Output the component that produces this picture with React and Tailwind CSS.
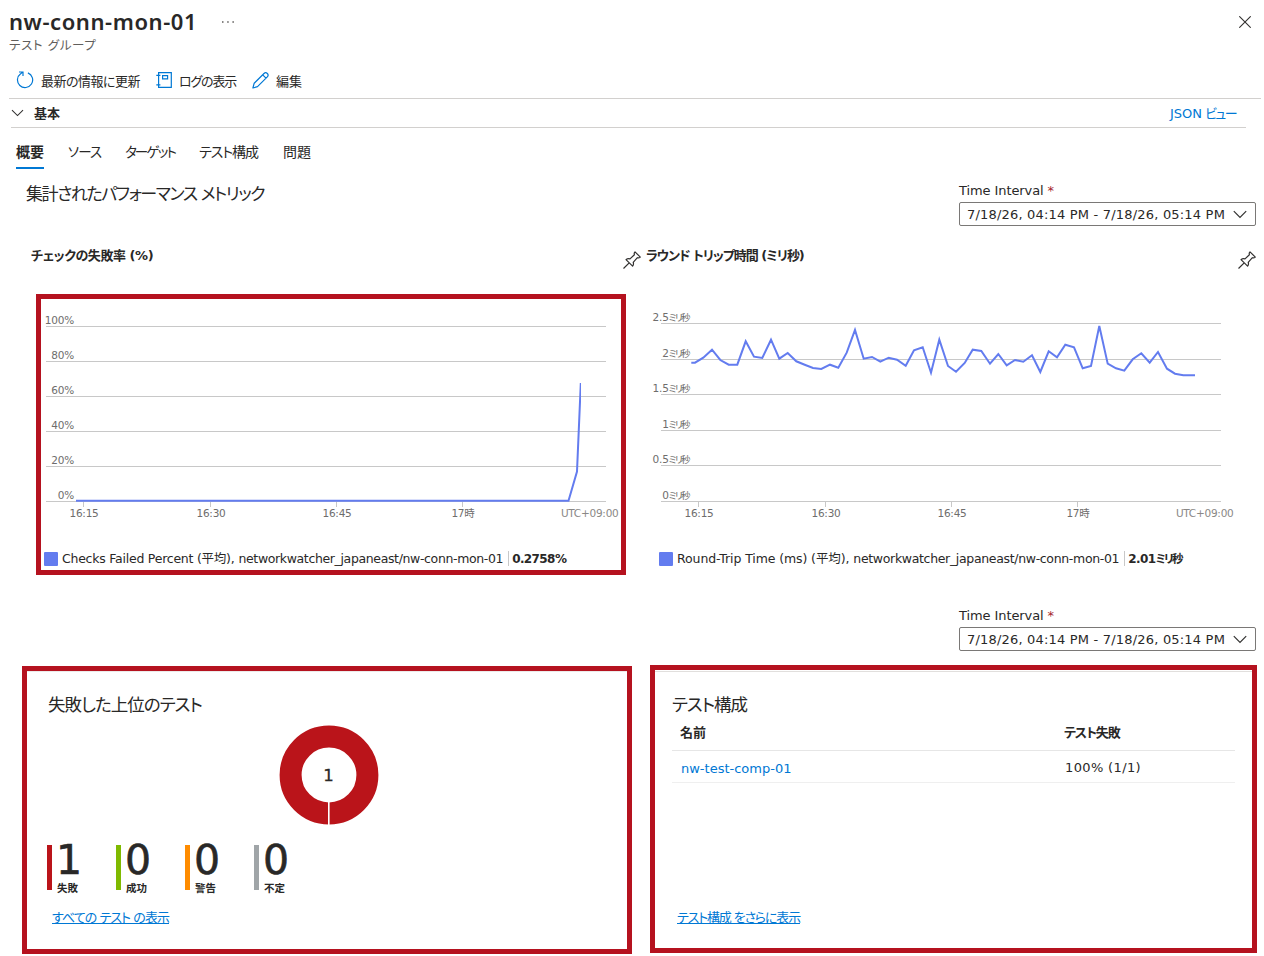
import React from "react";

const PinIcon = () => (
  <svg width="18" height="18" viewBox="0 0 18 18" fill="none" stroke="#323130" strokeWidth="1.2" strokeLinejoin="round" className="shrink-0">
    <path d="M0.5 17.5 6.2 11.8M3 8.6 9.6 15.1C10.6 13.9 10.7 12.6 10.2 11.3L14.4 6.7C15.4 7 16.4 6.8 17.3 6.1L12 0.8C11.2 1.6 11 2.6 11.4 3.7L7 7.9C5.6 7.4 4.2 7.6 3 8.6Z" />
  </svg>
);

const RefreshIcon = () => (
  <svg width="18" height="18" viewBox="0 0 18 18" fill="none" stroke="#0078d4" strokeWidth="1.2">
    <path d="M11.9 1.9A7.6 7.6 0 1 1 4.6 2.8L6.8 1.1M3 1H7V5" />
  </svg>
);

const LogIcon = () => (
  <svg width="16" height="16" viewBox="0 0 16 16" fill="none" stroke="#0078d4" strokeWidth="1.2">
    <path d="M2.6 0.6H15.3V15.3H2.6ZM0.3 3.4H4.4M0.3 12.8H4.4M6.6 3.6H11.6V6.8H6.6Z" />
  </svg>
);

const PencilIcon = () => (
  <svg width="17" height="17" viewBox="0 0 17 17" fill="none" stroke="#0078d4" strokeWidth="1.2" strokeLinejoin="round">
    <path d="M0.9 16 2.2 11.2 12 1.5A2.1 2.1 0 0 1 15.3 4.8L5.5 14.6ZM10.7 2.8 14 6.1" />
  </svg>
);

const Chevron = ({ className }) => (
  <svg width="14" height="9" viewBox="0 0 14 9" fill="none" stroke="#323130" strokeWidth="1.2" className={className}>
    <path d="M0.8 1.2 7 7.4 13.2 1.2" />
  </svg>
);

function TimeInterval() {
  return (
    <div className="flex w-[297px] flex-col gap-1">
      <div className="h-4 text-[13px] leading-[18px] tracking-[-0.09px]">
        Time Interval <span className="text-[#a4262c]">*</span>
      </div>
      <div className="flex h-6 items-center justify-between rounded-[2px] border border-[#7a7876] pl-[7px] pr-2">
        <span className="whitespace-nowrap pt-[2px] text-[13px] leading-4 tracking-[0.19px]">7/18/26, 04:14 PM - 7/18/26, 05:14 PM</span>
        <Chevron />
      </div>
    </div>
  );
}

const failRate = {
  title: "チェックの失敗率 (%)",
  titleClass: "tracking-[-0.45px]",
  highlighted: true,
  unit: "%",
  unitClass: "tracking-[-0.26px]",
  grid: [27, 62, 97, 132, 167, 202],
  labels: ["100", "80", "60", "40", "20", "0"],
  line: "35,201.7 527.5,201.7 536,172.5 539.8,84",
  series: ["Checks Failed Percent (平均),", "networkwatcher_japaneast/nw-conn-mon-01"],
  seriesClass: ["tracking-[-0.24px]", "tracking-[-0.36px]"],
  value: "0.2758",
  valueUnitClass: "tracking-[-0.6px]",
};

const roundTrip = {
  title: "ラウンド トリップ時間 (ミリ秒)",
  titleClass: "tracking-[-1.03px]",
  highlighted: false,
  unit: "ミリ秒",
  unitClass: "text-[9.5px] tracking-[-1.6px]",
  grid: [24, 60, 95, 131, 166, 202],
  labels: ["2.5", "2", "1.5", "1", "0.5", "0"],
  line: "35.3,63.7 39,63.7 47.3,58.7 56,50.7 64.3,61 72.7,65.7 81.3,65.7 89.7,42.3 98,57.7 106.3,59 115,40.7 123.3,59.7 131.7,54 140.3,62.3 148.7,65.7 157,69 165.3,70 174,65.7 182.3,68.7 190.7,53.7 199,31 207.7,59.7 216,58 224.3,62.7 232.7,58.7 241,60.7 249.7,66.7 258,51.3 266.7,48.3 275,73.7 283.3,40.7 292,67 300,72.7 308.7,64 316.7,50.7 325.3,52 334,64.7 342.3,55 350.7,66.3 359,61 367.3,62.7 376,56.3 384.3,73 392.7,52.3 401,58.3 409.3,45.7 418,48.3 426.7,69.3 435,67 443.3,27 451.7,64.7 460,69.3 468.3,71.7 476.7,60.3 485.3,54.3 493.7,63.7 502,53 511,69.7 519,74.7 527.3,76.3 539,76.3",
  series: ["Round-Trip Time (ms) (平均),", "networkwatcher_japaneast/nw-conn-mon-01"],
  seriesClass: ["tracking-[-0.1px]", "tracking-[-0.33px]"],
  value: "2.01",
  valueUnitClass: "text-[11.5px] tracking-[-1.8px]",
};

const timeTicks = [
  [42.5, "16:15"],
  [169.5, "16:30"],
  [295.5, "16:45"],
  [421.5, "17時"],
];

function Chart({ c }) {
  return (
    <section className="w-[615px]">
      <header className="flex h-[30px] items-center justify-between pl-[5px]">
        <h2 className={"whitespace-nowrap pt-px text-[13px] font-bold leading-5 " + c.titleClass}>{c.title}</h2>
        <div className="pt-[10px]">
          <PinIcon />
        </div>
      </header>
      <div className={"ml-[10px] mt-6 h-[281px] w-[590px] border-[5px] " + (c.highlighted ? "border-[#b5121f]" : "border-transparent")}>
        <svg width="580" height="248" viewBox="0 0 580 248" className="block overflow-visible text-[10.5px]">
          {c.grid.map((y, i) => (
            <g key={y}>
              <rect x="5" y={y} width="560" height="1" fill="#c8c8c8" />
              <text x="33" y={y - 2} textAnchor="end" fill="#6e6d6c" className="tracking-[-0.2px]">
                {c.labels[i]}
                <tspan className={c.unitClass}>{c.unit}</tspan>
              </text>
            </g>
          ))}
          {timeTicks.map(([x, label]) => (
            <g key={label}>
              <rect x={x - 0.5} y="203" width="1" height="5" fill="#c8c8c8" />
              <text x={x + 0.5} y="218" textAnchor="middle" fill="#6e6d6c" className="tracking-[-0.25px]">{label}</text>
            </g>
          ))}
          <text x="577.5" y="218" textAnchor="end" fill="#8a8886" className="tracking-[-0.25px]">UTC+09:00</text>
          <svg width="540" height="248">
            <polyline points={c.line} fill="none" stroke="#637cef" strokeWidth="2" />
          </svg>
        </svg>
        <div className="flex h-[23px] items-center whitespace-nowrap pl-[3px] text-[12.5px] leading-4">
          <span className="mr-1 size-[14px] shrink-0 rounded-[1px] bg-[#637cef]" />
          <span className={c.seriesClass[0]}>{c.series[0]}</span>
          <span className={"ml-1 " + c.seriesClass[1]}>{c.series[1]}</span>
          <span className="ml-[5px] mr-[3px] h-[15px] w-px shrink-0 bg-[#c8c8c8]" />
          <span className="text-[12px] font-bold tracking-[-0.6px]">
            {c.value}
            <span className={c.valueUnitClass}>{c.unit}</span>
          </span>
        </div>
      </div>
    </section>
  );
}

const stats = [
  ["1", "失敗", "bg-[#ba141a]"],
  ["0", "成功", "bg-[#7fba00]"],
  ["0", "警告", "bg-[#ff8c00]"],
  ["0", "不定", "bg-[#a0a5a8]"],
];

export default function App() {
  return (
    <div className="h-[956px] w-[1264px] overflow-hidden bg-white font-['DejaVu_Sans','Noto_Sans_CJK_JP',sans-serif] text-[#292827] [font-feature-settings:'palt']">
      <header className="flex h-[38px] items-start pl-[9px] pr-[13px] pt-[5px]">
        <h1 className="whitespace-nowrap font-['Noto_Sans',sans-serif] text-[22px] font-semibold leading-8 tracking-[0.58px]">nw-conn-mon-01</h1>
        <svg width="12" height="2" viewBox="0 0 12 2" fill="#605e5c" className="ml-[25px] mt-4">
          <path d="M0 0.3h1.5v1.5h-1.5zM5.2 0.3h1.5v1.5h-1.5zM10.4 0.3h1.5v1.5h-1.5z" />
        </svg>
        <svg width="12" height="12" viewBox="0 0 12 12" stroke="#323130" strokeWidth="1.1" className="ml-auto mt-[11px]">
          <path d="M0.3 0.3 11.7 11.7M11.7 0.3 0.3 11.7" />
        </svg>
      </header>
      <div className="h-[14px] pl-[9px] text-[12.5px] leading-4 tracking-[0.65px] text-[#605e5c]">テスト グループ</div>

      <div className="ml-[9px] mr-[3px] mt-3 flex h-[35px] items-center whitespace-nowrap border-b border-[#d2d0ce] pl-[7px] text-[13px] leading-[22px]">
        <div className="-mt-[2px]"><RefreshIcon /></div>
        <span className="ml-[7px] w-[100px] pt-px tracking-[-0.51px]">最新の情報に更新</span>
        <div className="-mt-[2px] ml-[15px]"><LogIcon /></div>
        <span className="ml-[7px] w-[57px] pt-px tracking-[-1.2px]">ログの表示</span>
        <div className="-mt-[2px] ml-[16px]"><PencilIcon /></div>
        <span className="ml-[7px] pt-px">編集</span>
      </div>

      <div className="ml-[11px] mr-[18px] flex h-[29px] items-center border-b border-[#d2d0ce] pr-[10px] text-[13px] leading-5">
        <Chevron className="h-2 w-[13px]" />
        <span className="ml-[10px] pt-px font-bold">基本</span>
        <a className="ml-auto pt-[2px] text-[#0078d4]">JSON <span className="-ml-[1px] tracking-[-1.6px]">ビュー</span></a>
      </div>

      <nav className="ml-4 mt-2 flex h-[33px] whitespace-nowrap text-[14px] leading-[33px]">
        <span className="mr-6 w-7 border-b-2 border-[#0078d4] font-bold">概要</span>
        <span className="mr-[22px] w-[35px] text-[13.5px] tracking-[-0.9px]">ソース</span>
        <span className="mr-[22px] w-[52px] text-[13.5px] tracking-[-1.85px]">ターゲット</span>
        <span className="mr-6 w-[60px] tracking-[-1.02px]">テスト構成</span>
        <span>問題</span>
      </nav>

      <div className="flex h-[57px] items-start justify-between pl-[26px] pr-2">
        <h2 className="whitespace-nowrap pt-[13px] text-[17px] leading-6 tracking-[-1.43px]">集計されたパフォーマンス メトリック</h2>
        <div className="pt-[13px]"><TimeInterval /></div>
      </div>

      <div className="ml-[26px] mt-[14px] flex">
        <Chart c={failRate} />
        <Chart c={roundTrip} />
      </div>

      <div className="mt-8 flex justify-end pr-2">
        <TimeInterval />
      </div>

      <div className="mt-[14px] flex items-start gap-[18px] pl-[22px]">
        <section className="mt-px h-[288px] w-[610px] border-[5px] border-[#b5121f]">
          <div className="border-t border-[#ecebea] pl-5 pt-5">
            <h2 className="whitespace-nowrap pl-px pt-px text-[17.5px] leading-6 tracking-[-0.95px]">失敗した上位のテスト</h2>
            <svg width="100" height="100" viewBox="0 0 100 100" className="ml-[232px] mt-2 block">
              <circle cx="50" cy="50" r="38.4" fill="none" stroke="#ba141a" strokeWidth="22" />
              <rect x="49" y="77" width="1.6" height="23" fill="#fff" />
              <text x="49.5" y="56" textAnchor="middle" fill="#292827" stroke="#292827" strokeWidth="0.3" className="text-[16.5px]">1</text>
            </svg>
            <div className="mt-5 flex">
              {stats.map(([n, label, color]) => (
                <div key={label} className="flex h-[45px] w-[69px]">
                  <span className={"w-[5px] " + color} />
                  <div className="pl-[5px]">
                    <div className="-ml-px h-9 text-[41px] leading-[31px] [-webkit-text-stroke:0.6px_#292827]">{n}</div>
                    <div className="text-[10.5px] font-bold leading-[14px]">{label}</div>
                  </div>
                </div>
              ))}
            </div>
            <a className="ml-[5px] mt-[19px] inline-block whitespace-nowrap text-[13px] leading-[18px] tracking-[-0.95px] text-[#0078d4] underline">すべての テスト の表示</a>
          </div>
        </section>

        <section className="h-[288px] w-[607px] border-[5px] border-[#b5121f]">
          <div className="mt-px border-t border-[#e1dfdd] pl-[17px] pr-[17px] pt-5">
            <h2 className="whitespace-nowrap pt-px text-[17.5px] leading-6 tracking-[-1.05px]">テスト構成</h2>
            <div className="flex h-[34px] border-b border-[#e6e6e6] pl-2 text-[13px] font-bold leading-8">
              <span className="w-[384px]">名前</span>
              <span className="tracking-[-1.1px]">テスト失敗</span>
            </div>
            <div className="flex h-8 border-b border-[#efefef] pl-[9px] text-[13px] leading-[34px]">
              <a className="w-[384px] pt-px text-[#0078d4]">nw-test-comp-01</a>
              <span className="tracking-[0.36px]">100% (1/1)</span>
            </div>
            <a className="ml-[5px] mt-[126px] inline-block whitespace-nowrap text-[13px] leading-[18px] tracking-[-1.17px] text-[#0078d4] underline">テスト構成 をさらに表示</a>
          </div>
        </section>
      </div>
    </div>
  );
}
